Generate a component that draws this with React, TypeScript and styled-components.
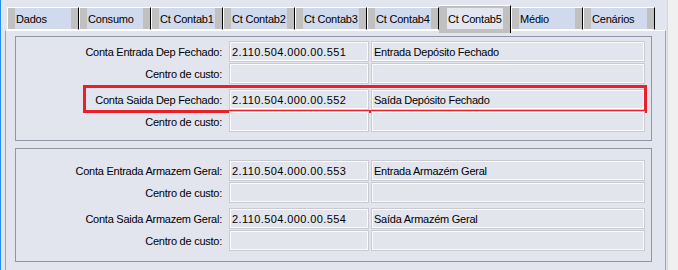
import React from "react";
import styled, { createGlobalStyle } from "styled-components";

const GlobalStyle = createGlobalStyle`
  html, body {
    margin: 0;
    padding: 0;
  }
  body {
    font-family: "Liberation Sans", Arial, sans-serif;
    font-size: 11px;
    color: #000;
    background: #e2e5ed;
  }
`;

const tabs = [
  "Dados",
  "Consumo",
  "Ct Contab1",
  "Ct Contab2",
  "Ct Contab3",
  "Ct Contab4",
  "Ct Contab5",
  "Médio",
  "Cenários",
];

type Row = { label: string; code?: string; desc?: string; highlight?: boolean };

const groups: { pad: [number, number]; pairGap: number; rows: Row[] }[] = [
  {
    pad: [4, 8],
    pairGap: 6,
    rows: [
      { label: "Conta Entrada Dep Fechado:", code: "2.110.504.000.00.551", desc: "Entrada Depósito Fechado" },
      { label: "Centro de custo:" },
      { label: "Conta Saida Dep Fechado:", code: "2.110.504.000.00.552", desc: "Saída Depósito Fechado", highlight: true },
      { label: "Centro de custo:" },
    ],
  },
  {
    pad: [11, 10],
    pairGap: 5,
    rows: [
      { label: "Conta Entrada Armazem Geral:", code: "2.110.504.000.00.553", desc: "Entrada Armazém Geral" },
      { label: "Centro de custo:" },
      { label: "Conta Saida Armazem Geral:", code: "2.110.504.000.00.554", desc: "Saída Armazém Geral" },
      { label: "Centro de custo:" },
    ],
  },
];

const Window = styled.div`
  display: flex;
  width: 678px;
  height: 270px;
  overflow: hidden;
  background: #e2e5ed;
`;

const BlueEdge = styled.div`
  flex: none;
  width: 1px;
  background: #1e8ef0;
`;

const Main = styled.div`
  flex: none;
  width: 666px;
  box-sizing: border-box;
  padding-left: 4px;
  display: flex;
  flex-direction: column;
`;

const SideStrip = styled.div`
  flex: 1;
  border-left: 1px solid #d3d6dd;
  background: #f0f0f0;
`;

const TabStrip = styled.div`
  flex: none;
  height: 30px;
  display: flex;
  align-items: flex-start;
  padding-left: 2px;
`;

const Tab = styled.div<{ $active?: boolean }>`
  flex: none;
  width: 72px;
  box-sizing: border-box;
  display: flex;
  background: #c0c0c0;
  border-top: 1px solid #fff;
  border-right: 1px solid #000;
  ${(p) =>
    p.$active
      ? `
    position: relative;
    z-index: 1;
    height: 28px;
    margin-top: 5px;
    margin-bottom: -3px;
    padding: 2px 7px 4px 8px;
  `
      : `
    height: 23px;
    margin-top: 7px;
    border-left: 1px solid #fff;
    border-bottom: 1px solid #fff;
    padding: 0 7px;
  `}
`;

const TabFace = styled.div<{ $active?: boolean }>`
  flex: 1;
  display: flex;
  align-items: center;
  padding-left: 1px;
  white-space: nowrap;
  overflow: hidden;
  letter-spacing: -0.2px;
  background: ${(p) => (p.$active ? "#e4e7ef" : "#d1daec")};
`;

const Panel = styled.div`
  flex: 1;
  box-sizing: border-box;
  width: 661px;
  border: 1px solid #9ba3b4;
  border-top-color: #fff;
  border-bottom: none;
  padding: 5px 13px 0 9px;
  display: flex;
  flex-direction: column;
  gap: 7px;
`;

const Group = styled.div<{ $top: number; $bottom: number }>`
  border: 1px solid #8e96a6;
  padding: ${(p) => `${p.$top}px 0 ${p.$bottom}px`};
  display: flex;
  flex-direction: column;
`;

const Pair = styled.div<{ $gap: number }>`
  display: flex;
  flex-direction: column;
  gap: 1px;
  & + & {
    margin-top: ${(p) => p.$gap}px;
  }
`;

const FieldRow = styled.div<{ $highlight?: boolean }>`
  position: relative;
  display: grid;
  grid-template-columns: 211px 140px 274px;
  column-gap: 2px;
  height: 21px;
  ${(p) =>
    p.$highlight &&
    `
    &::after {
      content: "";
      position: absolute;
      left: 67px;
      width: 564px;
      top: -4px;
      bottom: -3px;
      box-sizing: border-box;
      border: 3px solid #e8202a;
      pointer-events: none;
    }
  `}
`;

const Label = styled.div`
  display: flex;
  align-items: center;
  justify-content: flex-end;
  padding-right: 5px;
  white-space: nowrap;
  letter-spacing: -0.25px;
`;

const Field = styled.div<{ $mono?: boolean }>`
  box-sizing: border-box;
  height: 21px;
  display: flex;
  align-items: center;
  padding-left: 2px;
  border: 1px solid #c9cbd1;
  box-shadow: inset 0 0 0 1px #fbfbfd;
  white-space: nowrap;
  overflow: hidden;
  letter-spacing: ${(p) => (p.$mono ? "0.4px" : "-0.25px")};
`;

export default function App() {
  return (
    <>
      <GlobalStyle />
      <Window>
        <BlueEdge />
        <Main>
          <TabStrip>
            {tabs.map((t) => {
              const active = t === "Ct Contab5";
              return (
                <Tab key={t} $active={active}>
                  <TabFace $active={active}>{t}</TabFace>
                </Tab>
              );
            })}
          </TabStrip>
          <Panel>
            {groups.map((g, gi) => (
              <Group key={gi} $top={g.pad[0]} $bottom={g.pad[1]}>
                {[g.rows.slice(0, 2), g.rows.slice(2, 4)].map((pair, pi) => (
                  <Pair key={pi} $gap={g.pairGap}>
                    {pair.map((r, ri) => (
                      <FieldRow key={ri} $highlight={r.highlight}>
                        <Label>{r.label}</Label>
                        <Field $mono>{r.code}</Field>
                        <Field>{r.desc}</Field>
                      </FieldRow>
                    ))}
                  </Pair>
                ))}
              </Group>
            ))}
          </Panel>
        </Main>
        <SideStrip />
      </Window>
    </>
  );
}
